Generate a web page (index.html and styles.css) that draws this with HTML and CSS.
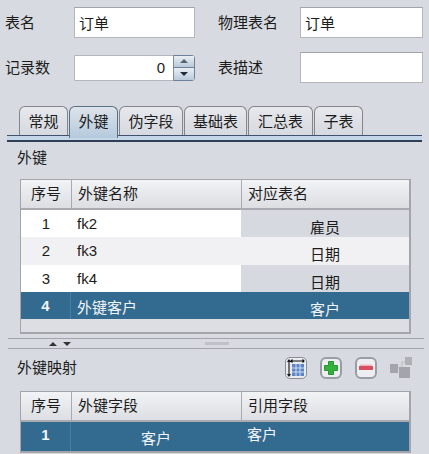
FILE: index.html
```html
<!DOCTYPE html>
<html lang="en">
<head>
    <meta charset="UTF-8">
    <meta name="viewport" content="width=device-width, initial-scale=1.0">
    <title>表属性</title>
    <link rel="stylesheet" href="styles.css">
</head>
<body>
    <div class="panel">
        <div class="fields">
            <div class="field-row first">
                <span class="field-label left">表名</span>
                <input class="text-input name-input" type="text" value="订单">
                <span class="field-label mid">物理表名</span>
                <input class="text-input" type="text" value="订单">
            </div>
            <div class="field-row second">
                <span class="field-label left">记录数</span>
                <div class="spinner">
                    <span class="spinner-value">0</span>
                    <div class="spinner-btns">
                        <span class="spin-btn"><i class="arrow-up"></i></span>
                        <span class="spin-btn"><i class="arrow-down"></i></span>
                    </div>
                </div>
                <span class="field-label mid">表描述</span>
                <input class="text-input" type="text">
            </div>
        </div>

        <div class="tabs">
            <div class="tab">常规</div>
            <div class="tab active">外键</div>
            <div class="tab w-64">伪字段</div>
            <div class="tab w-63">基础表</div>
            <div class="tab w-65">汇总表</div>
            <div class="tab">子表</div>
        </div>
        <div class="tab-rule"></div>

        <div class="section-title top-title">外键</div>
        <div class="table-box fk-table">
            <div class="row header">
                <div class="cell no">序号</div>
                <div class="cell name">外键名称</div>
                <div class="cell ref">对应表名</div>
            </div>
            <div class="row r27">
                <div class="cell no">1</div>
                <div class="cell name">fk2</div>
                <div class="cell ref grey center low">雇员</div>
            </div>
            <div class="row r28 alt">
                <div class="cell no">2</div>
                <div class="cell name">fk3</div>
                <div class="cell ref center low">日期</div>
            </div>
            <div class="row r27">
                <div class="cell no">3</div>
                <div class="cell name">fk4</div>
                <div class="cell ref grey center low">日期</div>
            </div>
            <div class="row r27 selected">
                <div class="cell no">4</div>
                <div class="cell name nudge">外键客户</div>
                <div class="cell ref center low">客户</div>
            </div>
        </div>

        <div class="splitter">
            <div class="split-arrows"><i class="mini-up"></i><i class="mini-down"></i></div>
            <div class="grip"></div>
        </div>

        <div class="map-head">
            <div class="section-title">外键映射</div>
            <div class="tools">
                <span class="tool">
                    <svg width="20" height="20" viewBox="0 0 20 20">
                        <path d="M3 2v16M1.500 4 3 2l1.500 2M1.500 16 3 18l1.500-2M5 3h13M6.500 1.500 5 3l1.500 1.500M16.500 1.500 18 3l-1.500 1.500" fill="none" stroke="#111" stroke-width="1.100"/>
                        <rect x="6" y="6" width="12" height="12" fill="#5f86c4"/>
                        <path d="M6 10h12M6 14h12M10 6v12M14 6v12" stroke="#cfdcf0" stroke-width="1"/>
                    </svg>
                </span>
                <span class="tool framed">
                    <svg width="14" height="14" viewBox="0 0 14 14">
                        <path d="M4.500 .5h5v4h4v5h-4v4h-5v-4h-4v-5h4z" fill="#35b03c" stroke="#2a9433"/>
                    </svg>
                </span>
                <span class="tool framed">
                    <svg width="14" height="14" viewBox="0 0 14 14">
                        <rect x="0" y="5" width="14" height="4" fill="#d94f5e"/>
                        <rect x="1" y="3.500" width="12" height="1.500" fill="#eeb6bb"/>
                    </svg>
                </span>
                <span class="tool plain">
                    <svg width="22" height="22" viewBox="0 0 22 22">
                        <path d="M8 11h4M12 5h3M12 5v6" stroke="#b7b9be" fill="none"/>
                        <rect x="0" y="7" width="8" height="9" fill="#a3a5aa"/>
                        <rect x="15" y="0" width="7" height="8" fill="#aeb0b4"/>
                        <rect x="9" y="10" width="11" height="11" fill="#a3a5aa"/>
                    </svg>
                </span>
            </div>
        </div>
        <div class="table-box map-table">
            <div class="row header">
                <div class="cell no">序号</div>
                <div class="cell name">外键字段</div>
                <div class="cell ref">引用字段</div>
            </div>
            <div class="row r29 selected">
                <div class="cell no">1</div>
                <div class="cell name center low">客户</div>
                <div class="cell ref">客户</div>
            </div>
        </div>
    </div>
</body>
</html>
```

FILE: styles.css
```css
html, body {
    margin: 0;
    height: 100%;
    overflow: hidden;
}
body {
    background-color: #d7dae0;
    color: #1c1c1c;
    font-family: 'Liberation Sans', 'Noto Sans CJK SC', sans-serif;
    font-size: 15px;
}
.panel {
    display: flex;
    flex-direction: column;
    height: 454px;
    padding-top: 7px;
    box-sizing: border-box;
}
.fields {
    height: 76px;
}
.field-row {
    display: flex;
    align-items: center;
}
.field-row.second {
    margin-top: 14px;
}
.field-label {
    line-height: 20px;
}
.field-label.left {
    width: 74px;
    padding-left: 5px;
    box-sizing: border-box;
}
.field-label.mid {
    width: 82px;
    margin-left: 23px;
    box-sizing: border-box;
}
.text-input {
    width: 123px;
    height: 31px;
    box-sizing: border-box;
    border: 1px solid #b3b6bb;
    border-top-color: #a2a5aa;
    background-color: #fff;
    padding: 0 4px;
    margin: 0;
    font: inherit;
    color: #1c1c1c;
    outline: none;
}
.name-input {
    width: 121px;
}
.spinner {
    display: flex;
    width: 121px;
    height: 26px;
    box-sizing: border-box;
    border: 1px solid #b3b6bb;
    border-radius: 0 4px 4px 0;
    background-color: #fff;
}
.spinner-value {
    flex: 1;
    text-align: right;
    padding-right: 8px;
    line-height: 24px;
}
.spinner-btns {
    display: flex;
    flex-direction: column;
    width: 21px;
    border-left: 1px solid #7d8ca0;
    margin: -1px -1px -1px 0;
    border-radius: 0 4px 4px 0;
    overflow: hidden;
}
.spin-btn {
    flex: 1;
    display: flex;
    align-items: center;
    justify-content: center;
    background: linear-gradient(#e9eef3, #b9cadb);
    border: 1px solid #6f8198;
    border-left: none;
}
.spin-btn + .spin-btn {
    border-top: none;
}
.arrow-up {
    border: 4px solid transparent;
    border-top: none;
    border-bottom: 4px solid #5a6270;
}
.arrow-down {
    border: 4px solid transparent;
    border-bottom: none;
    border-top: 4px solid #1f2a3a;
}

.tabs {
    display: flex;
    gap: 1px;
    margin: 23px 0 0 19px;
    height: 29px;
}
.tab {
    width: 49px;
    box-sizing: border-box;
    border: 1px solid #82858c;
    border-bottom: none;
    border-radius: 6px 6px 0 0;
    background: linear-gradient(#e6e8ec, #d6d9df);
    text-align: center;
    line-height: 29px;
}
.tab.w-64 { width: 64px; }
.tab.w-63 { width: 63px; }
.tab.w-65 { width: 65px; }
.tab.active {
    background: linear-gradient(#dde3ea, #b4cadd);
    border-color: #5d6f82;
    height: 32px;
    position: relative;
}
.tab-rule {
    height: 4px;
    margin: 0 0 0 7px;
    width: 415px;
    background-color: #c4d6e8;
    border-top: 1px solid #42526a;
    border-bottom: 2px solid #2f3f55;
    flex: none;
}
.section-title {
    line-height: 20px;
    padding-left: 17px;
}
.top-title {
    margin-top: 6px;
}

.table-box {
    margin: 11px 0 0 20px;
    width: 391px;
    box-sizing: border-box;
    border: 1px solid #a3a5ab;
    border-right-width: 2px;
    border-bottom-width: 2px;
    background-color: #dcdee3;
}
.fk-table {
    height: 155px;
}
.map-table {
    margin-top: 0;
    height: 62px;
}
.row {
    display: flex;
    background-color: #fff;
}
.cell {
    box-sizing: border-box;
    padding-left: 6px;
    white-space: nowrap;
}
.cell.no {
    width: 50px;
    padding-left: 0;
    text-align: center;
}
.cell.name {
    width: 170px;
}
.cell.ref {
    flex: 1;
}
.cell.center {
    text-align: center;
    padding-left: 0;
}
.cell.low {
    padding-top: 4px;
}
.cell.nudge {
    padding-top: 2px;
}
.row.header {
    height: 30px;
    background: linear-gradient(#f2f3f5, #dcdee3);
    border-bottom: 2px solid #a9abb1;
    box-sizing: border-box;
    line-height: 28px;
}
.header .cell + .cell {
    border-left: 1px solid #a9abb1;
}
.r27 { height: 27px; line-height: 27px; }
.r28 { height: 28px; line-height: 28px; }
.r29 { height: 29px; line-height: 26px; }
.row.alt {
    background-color: #f1f1f3;
}
.cell.grey {
    background-color: #d6d9df;
}
.row.selected {
    background-color: #336a8f;
    color: #f2f5f8;
}
.selected .cell.no {
    border-right: 1px solid #4a7fa4;
    font-weight: bold;
}

.splitter {
    display: flex;
    align-items: center;
    height: 9px;
    margin: 4px 5px 0 8px;
    border-top: 1px solid #a3a5ab;
    border-bottom: 1px solid #a3a5ab;
}
.split-arrows {
    display: flex;
    gap: 6px;
    margin-left: 41px;
}
.mini-up {
    border: 4px solid transparent;
    border-top: none;
    border-bottom: 4px solid #333;
}
.mini-down {
    border: 4px solid transparent;
    border-bottom: none;
    border-top: 4px solid #333;
}
.grip {
    width: 24px;
    height: 3px;
    margin-left: 134px;
    background-color: #bfc1c6;
}
.map-head {
    display: flex;
    align-items: center;
    justify-content: space-between;
    height: 42px;
    box-sizing: border-box;
    padding: 0 17px 5px 0;
}
.tools {
    display: flex;
    align-items: center;
    gap: 13px;
}
.tool {
    display: flex;
    align-items: center;
    justify-content: center;
    width: 22px;
    height: 22px;
    box-sizing: border-box;
}
.tool:first-child {
    border: 1px solid #8b8e94;
    border-radius: 5px;
    background-color: #e9ebef;
}
.tool.framed {
    border: 2px solid #9a9da3;
    border-radius: 6px;
    background-color: #eceef1;
}
```
